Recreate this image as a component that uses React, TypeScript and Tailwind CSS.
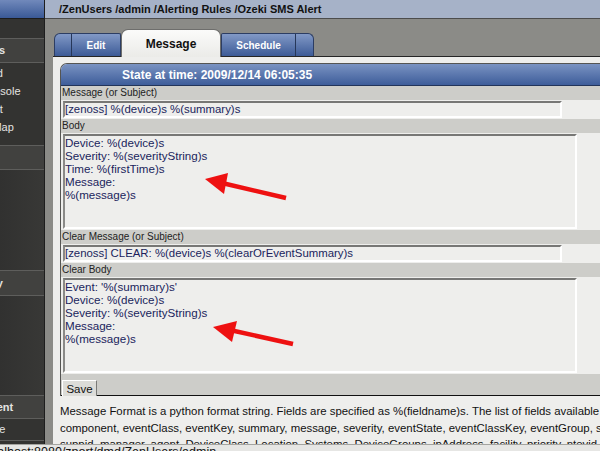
import React from "react";

const Divider = () => <div className="h-px shrink-0 bg-[#5e5e5c]" />;

const SideItem = ({ text, bold, h, light }: { text: string; bold?: boolean; h: string; light?: boolean }) => (
  <div className={`${h} shrink-0 flex items-center overflow-hidden ${light ? "bg-[#41413f]" : ""}`}>
    <span className={`whitespace-nowrap text-[11px] text-[#e4e4e2] ${bold ? "ml-[-54px] font-bold" : "ml-[-51px]"}`}>{text}</span>
  </div>
);

const Sidebar = () => (
  <aside className="w-[45px] shrink-0 flex flex-col bg-[#333331] border-r border-[#1e1e1e]">
    <div className="h-[19px] shrink-0 bg-linear-to-b from-[#7189bb] to-[#3a5996] border-b border-[#1c1c1c]" />
    <div className="h-[19px] shrink-0" />
    <Divider />
    <SideItem text="Main Views" bold h="h-[23px]" light />
    <Divider />
    <div className="h-[82px] shrink-0 pt-px flex flex-col">
      <SideItem text="Dashboard" h="h-[18px]" />
      <SideItem text="Event Console" h="h-[18px]" />
      <SideItem text="Device List" h="h-[18px]" />
      <SideItem text="Network Map" h="h-[18px]" />
    </div>
    <Divider />
    <div className="h-[23px] shrink-0 bg-[#41413f]" />
    <Divider />
    <div className="h-[100px] shrink-0 bg-linear-to-r from-[#313130] to-[#383836]" />
    <Divider />
    <SideItem text="Browse By" bold h="h-[24px]" light />
    <Divider />
    <div className="h-[99px] shrink-0 bg-linear-to-r from-[#313130] to-[#383836]" />
    <Divider />
    <SideItem text="Management" bold h="h-[22px]" light />
    <Divider />
    <SideItem text="Add Device" h="h-[21px]" />
    <Divider />
  </aside>
);

const Tabs = () => (
  <div className="h-[38px] shrink-0 flex items-end pl-px border-b border-[#262626]">
    <div className="w-[67px] h-[23px] flex rounded-tl-[6px] rounded-tr-[2px] border border-b-0 border-[#2c3d63] bg-linear-to-b from-[#8299c6] to-[#3d5b97] overflow-hidden">
      <div className="w-[17px] border-r border-[#263759]" />
      <div className="flex-1 flex items-center justify-center text-[10px] font-bold text-white">Edit</div>
    </div>
    <div className="relative z-10 -mb-px w-[100px] h-[28px] rounded-t-[7px] border border-b-0 border-[#6e6e6c] bg-linear-to-b from-[#fbfbfa] to-[#ebebe8] flex items-center justify-center text-[12px] font-bold text-[#111]">
      Message
    </div>
    <div className="w-[93px] h-[23px] flex rounded-tr-[6px] rounded-tl-[2px] border border-b-0 border-[#2c3d63] bg-linear-to-b from-[#8299c6] to-[#3d5b97] overflow-hidden">
      <div className="flex-1 flex items-center justify-center text-[10px] font-bold text-white">Schedule</div>
      <div className="w-[18px] border-l border-[#263759]" />
    </div>
  </div>
);

const Label = ({ children }: { children: React.ReactNode }) => (
  <div className="h-[14px] bg-[#cdcdc9] pl-px text-[10px] leading-[14px] text-[#222]">{children}</div>
);

const Field = ({ value }: { value: string }) => (
  <div className="h-[19px] pl-[2px] pt-px">
    <div className="w-[499px] h-[17px] border-2 border-t-[#777775] border-l-[#8a8a88] border-b-white border-r-white bg-[#eeeeec] text-[11.4px] leading-[13px] text-[#201e5c] whitespace-nowrap">
      {value}
    </div>
  </div>
);

const Area = ({ lines }: { lines: string[] }) => (
  <div className="h-[97px] pl-[2px] pt-px">
    <div className="w-[514px] h-[95px] border-2 border-t-[#777775] border-l-[#8a8a88] border-b-white border-r-white bg-[#eeeeec] text-[11.6px] leading-[13px] text-[#201e5c]">
      {lines.map((l) => (
        <div key={l}>{l}</div>
      ))}
    </div>
  </div>
);

const Arrow = ({ x1, y1, x2, y2, tip, w1, w2 }: { x1: number; y1: number; x2: number; y2: number; tip: string; w1: string; w2: string }) => (
  <>
    <line x1={x1} y1={y1} x2={x2} y2={y2} stroke="#ee1111" strokeWidth="4.5" />
    <polygon points={`${tip} ${w1} ${w2}`} fill="#ee1111" />
  </>
);

export default function App() {
  return (
    <div className="relative w-[600px] h-[451px] overflow-hidden flex flex-col bg-[#8b8b87] font-['Liberation_Sans',Arial,sans-serif]">
      <div className="flex flex-1 min-h-0">
        <Sidebar />
        <div className="flex-1 min-w-0 flex flex-col">
          <div className="h-[19px] shrink-0 bg-[#a6b2c8] border-b border-[#4c4c4c] pl-[14px] flex items-center text-[11px] font-bold text-[#111] whitespace-nowrap">
            /ZenUsers /admin /Alerting Rules /Ozeki SMS Alert
          </div>
          <div className="flex-1 min-h-0 pl-[8px] flex flex-col">
            <Tabs />
            <div className="flex-1 min-h-0 bg-[#eeeeec] pl-[7px] pt-[6px]">
              <div className="w-[600px] rounded-tl-[7px] border-l border-t border-[#555553] overflow-hidden">
                <div className="h-[22px] bg-linear-to-b from-[#7a93c2] to-[#3e5d9a] border-b border-[#22345a] pl-[61px] flex items-center text-[12px] font-bold text-white whitespace-nowrap">
                  State at time: 2009/12/14 06:05:35
                </div>
                <Label>Message (or Subject)</Label>
                <Field value="[zenoss] %(device)s %(summary)s" />
                <Label>Body</Label>
                <Area lines={["Device: %(device)s", "Severity: %(severityString)s", "Time: %(firstTime)s", "Message:", "%(message)s"]} />
                <Label>Clear Message (or Subject)</Label>
                <Field value="[zenoss] CLEAR: %(device)s %(clearOrEventSummary)s" />
                <Label>Clear Body</Label>
                <Area lines={["Event: '%(summary)s'", "Device: %(device)s", "Severity: %(severityString)s", "Message:", "%(message)s"]} />
                <div className="h-[22px] bg-[#cdcdc9] border-b border-[#111] pl-px pt-[2px]">
                  <button className="w-[35px] h-[19px] bg-[#dcdcd8] border border-t-white border-l-white border-b-[#7a7a78] border-r-[#7a7a78] text-[11.5px] leading-none text-[#111]">
                    Save
                  </button>
                </div>
              </div>
              <div className="pt-[7px] text-[11.4px] leading-[16.5px] text-[#111] whitespace-nowrap">
                <div>Message Format is a python format string. Fields are specified as %(fieldname)s. The list of fields available are: dedupid, evid, device,</div>
                <div>component, eventClass, eventKey, summary, message, severity, eventState, eventClassKey, eventGroup, stateChange, firstTime,</div>
                <div>suppid, manager, agent, DeviceClass, Location, Systems, DeviceGroups, ipAddress, facility, priority, ntevid, ownerid, lastTime</div>
              </div>
            </div>
          </div>
        </div>
      </div>
      <div className="h-[7px] shrink-0 bg-[#e6e6e4] border-t border-[#a4a4a0] overflow-hidden">
        <div className="ml-[-50px] whitespace-nowrap text-[12.5px] leading-[14px] text-[#111]">http://localhost:8080/zport/dmd/ZenUsers/admin</div>
      </div>
      <svg className="absolute inset-0 pointer-events-none" width="600" height="451">
        <Arrow x1={286} y1={198} x2={222} y2={183} tip="205,179" w1="228,173" w2="224,194" />
        <Arrow x1={293} y1={344} x2={230} y2={330} tip="213,327" w1="237,321" w2="232,342" />
      </svg>
    </div>
  );
}
